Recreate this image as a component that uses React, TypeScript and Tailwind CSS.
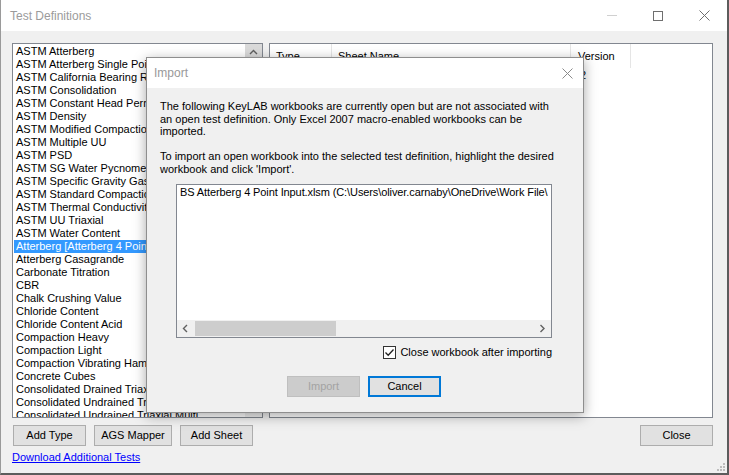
import React from "react"

const tests = [
  "ASTM Atterberg",
  "ASTM Atterberg Single Point",
  "ASTM California Bearing Ratio",
  "ASTM Consolidation",
  "ASTM Constant Head Permeability",
  "ASTM Density",
  "ASTM Modified Compaction",
  "ASTM Multiple UU",
  "ASTM PSD",
  "ASTM SG Water Pycnometer",
  "ASTM Specific Gravity Gas",
  "ASTM Standard Compaction",
  "ASTM Thermal Conductivity",
  "ASTM UU Triaxial",
  "ASTM Water Content",
  "Atterberg [Atterberg 4 Point]",
  "Atterberg Casagrande",
  "Carbonate Titration",
  "CBR",
  "Chalk Crushing Value",
  "Chloride Content",
  "Chloride Content Acid",
  "Compaction Heavy",
  "Compaction Light",
  "Compaction Vibrating Hammer",
  "Concrete Cubes",
  "Consolidated Drained Triaxial",
  "Consolidated Undrained Triaxial",
  "Consolidated Undrained Triaxial Multi",
]

const SELECTED = 15

function WinButton({ label, width = "w-[73px]" }: { label: string; width?: string }) {
  return (
    <button className={`${width} h-[21px] bg-[#e1e1e1] border border-[#adadad] text-black text-[11px] leading-none`}>
      {label}
    </button>
  )
}

function Chevron({ dir }: { dir: "up" | "left" | "right" }) {
  const d =
    dir === "up" ? "M1 5 L4.5 1.5 L8 5" : dir === "left" ? "M5 1 L1.5 4.5 L5 8" : "M1.5 1 L5 4.5 L1.5 8"
  const w = dir === "up" ? 9 : 7
  const h = dir === "up" ? 7 : 9
  return (
    <svg width={w} height={h} viewBox={`0 0 ${w} ${h}`}>
      <path d={d} fill="none" stroke="#606060" strokeWidth="1.4" />
    </svg>
  )
}

function ImportDialog() {
  return (
    <div className="absolute left-[145px] top-[57px] w-[438px] h-[356px] border border-[#8e8e8e] bg-[#f0f0f0] shadow-[0_3px_12px_rgba(0,0,0,0.35)] flex flex-col">
      {/* Title */}
      <div className="h-[30px] bg-white flex items-center justify-between pl-[7px] pr-[10px] shrink-0">
        <span className="text-[12px] text-[#999999]">Import</span>
        <svg width="11" height="11" viewBox="0 0 11 11">
          <path d="M0.5 0.5 L10.5 10.5 M10.5 0.5 L0.5 10.5" stroke="#8a8a8a" strokeWidth="1" />
        </svg>
      </div>

      <div className="flex flex-col pt-[12px] pl-[13px]">
        <p className="leading-[12.5px] whitespace-nowrap">
          The following KeyLAB workbooks are currently open but are not associated with
          <br />
          an open test definition. Only Excel 2007 macro-enabled workbooks can be
          <br />
          imported.
          <br />
          <br />
          To import an open workbook into the selected test definition, highlight the desired
          <br />
          workbook and click 'Import'.
        </p>

        {/* Workbook list */}
        <div className="mt-[9px] ml-[16px] w-[376px] h-[154px] border border-[#828790] bg-white flex flex-col">
          <div className="flex-1 pt-[1px] pl-[3px] overflow-hidden">
            <div className="leading-[13px] whitespace-nowrap tracking-[-0.1px]">
              BS Atterberg 4 Point Input.xlsm (C:\Users\oliver.carnaby\OneDrive\Work File\
            </div>
          </div>
          <div className="h-[17px] bg-[#f0f0f0] flex items-center">
            <div className="w-[17px] h-full flex items-center justify-center">
              <Chevron dir="left" />
            </div>
            <div className="flex-1 h-full py-[1px] pl-[1px]">
              <div className="w-[141px] h-full bg-[#cdcdcd]" />
            </div>
            <div className="w-[17px] h-full flex items-center justify-center">
              <Chevron dir="right" />
            </div>
          </div>
        </div>

        {/* Checkbox */}
        <div className="mt-[8px] w-[392px] flex justify-end items-center gap-[4px]">
          <div className="w-[13px] h-[13px] border border-[#333333] bg-white flex items-center justify-center">
            <svg width="11" height="11" viewBox="0 0 11 11">
              <path d="M1.5 5.5 L4.2 8.3 L9.5 2.5" fill="none" stroke="#222222" strokeWidth="1.3" />
            </svg>
          </div>
          <span className="leading-[13px]">Close workbook after importing</span>
        </div>
      </div>

      {/* Buttons */}
      <div className="mt-[17px] flex justify-center gap-[8px] pr-[2px]">
        <button className="w-[73px] h-[21px] bg-[#cccccc] border border-[#bfbfbf] text-[#a3a3a3] text-[11px] leading-none">
          Import
        </button>
        <button className="w-[73px] h-[21px] bg-[#e1e1e1] border-2 border-[#0078d7] text-black text-[11px] leading-none">
          Cancel
        </button>
      </div>
    </div>
  )
}

export default function App() {
  return (
    <div className="relative w-[729px] h-[475px] overflow-hidden bg-[#f0f0f0] border-l border-l-[#9a9a9a] border-r-2 border-r-[#5c5c5c] border-b-2 border-b-[#5c5c5c] flex flex-col font-['Liberation_Sans',Arial,sans-serif] text-[11px] text-black">
      {/* Window title bar */}
      <div className="h-[31px] bg-white flex items-center shrink-0">
        <span className="pl-[9px] text-[12px] text-[#9b9b9b]">Test Definitions</span>
        <div className="ml-auto flex h-full">
          <div className="w-[46px] h-full flex items-center justify-center">
            <div className="w-[10px] h-px bg-[#d0d0d0]" />
          </div>
          <div className="w-[46px] h-full flex items-center justify-center">
            <div className="w-[10px] h-[10px] border border-[#6f6f6f]" />
          </div>
          <div className="w-[46px] h-full flex items-center justify-center">
            <svg width="11" height="11" viewBox="0 0 11 11">
              <path d="M0.5 0.5 L10.5 10.5 M10.5 0.5 L0.5 10.5" stroke="#6f6f6f" strokeWidth="1" />
            </svg>
          </div>
        </div>
      </div>

      {/* Body */}
      <div className="flex flex-col pt-[12px] pl-[11px] pr-[14px]">
        <div className="flex gap-[6px] h-[375px]">
          {/* Test type list */}
          <div className="w-[251px] h-full border border-[#828790] bg-white flex">
            <div className="flex-1 pt-[1px] pl-[1px] overflow-hidden">
              {tests.map((t, i) => (
                <div
                  key={t}
                  className={
                    i === SELECTED
                      ? "h-[13px] leading-[13px] pl-[2px] whitespace-nowrap bg-[#3399ff] text-white"
                      : "h-[13px] leading-[13px] pl-[2px] whitespace-nowrap"
                  }
                >
                  {t}
                </div>
              ))}
            </div>
            <div className="w-[17px] h-full bg-[#f0f0f0] flex flex-col">
              <div className="h-[17px] bg-[#dadada] flex items-center justify-center">
                <Chevron dir="up" />
              </div>
            </div>
          </div>

          {/* Sheet list view */}
          <div className="w-[444px] h-full border border-[#828790] bg-white flex flex-col">
            <div className="h-[24px] flex">
              <div className="w-[62px] h-full border-r border-[#e5e5e5] pl-[6px] flex items-center">Type</div>
              <div className="w-[239px] h-full border-r border-[#e5e5e5] pl-[6px] flex items-center">Sheet Name</div>
              <div className="w-[60px] h-full border-r border-[#e5e5e5] pl-[7px] flex items-center">Version</div>
            </div>
            <div className="h-[15px] flex leading-[15px]">
              <div className="w-[62px] pl-[6px]">Atterberg</div>
              <div className="w-[239px] pl-[6px]">BS Atterberg 4 Point</div>
              <div className="w-[60px] pl-[9px]">2</div>
            </div>
          </div>
        </div>

        {/* Bottom buttons */}
        <div className="mt-[7px] flex items-center pl-[1px]">
          <div className="flex gap-[8px]">
            <WinButton label="Add Type" />
            <WinButton label="AGS Mapper" width="w-[78px]" />
            <WinButton label="Add Sheet" />
          </div>
          <div className="ml-auto">
            <WinButton label="Close" />
          </div>
        </div>

        <div className="mt-[5px] leading-[13px]">
          <a className="text-[#0000ff] underline">Download Additional Tests</a>
        </div>
      </div>

      <ImportDialog />

      {/* Size grip */}
      <svg className="absolute right-[1px] bottom-[1px]" width="9" height="9" viewBox="0 0 9 9">
        <rect x="6" y="0" width="2" height="2" fill="#bcbcbc" />
        <rect x="3" y="3" width="2" height="2" fill="#bcbcbc" />
        <rect x="6" y="3" width="2" height="2" fill="#bcbcbc" />
        <rect x="0" y="6" width="2" height="2" fill="#bcbcbc" />
        <rect x="3" y="6" width="2" height="2" fill="#bcbcbc" />
        <rect x="6" y="6" width="2" height="2" fill="#bcbcbc" />
      </svg>
    </div>
  )
}
